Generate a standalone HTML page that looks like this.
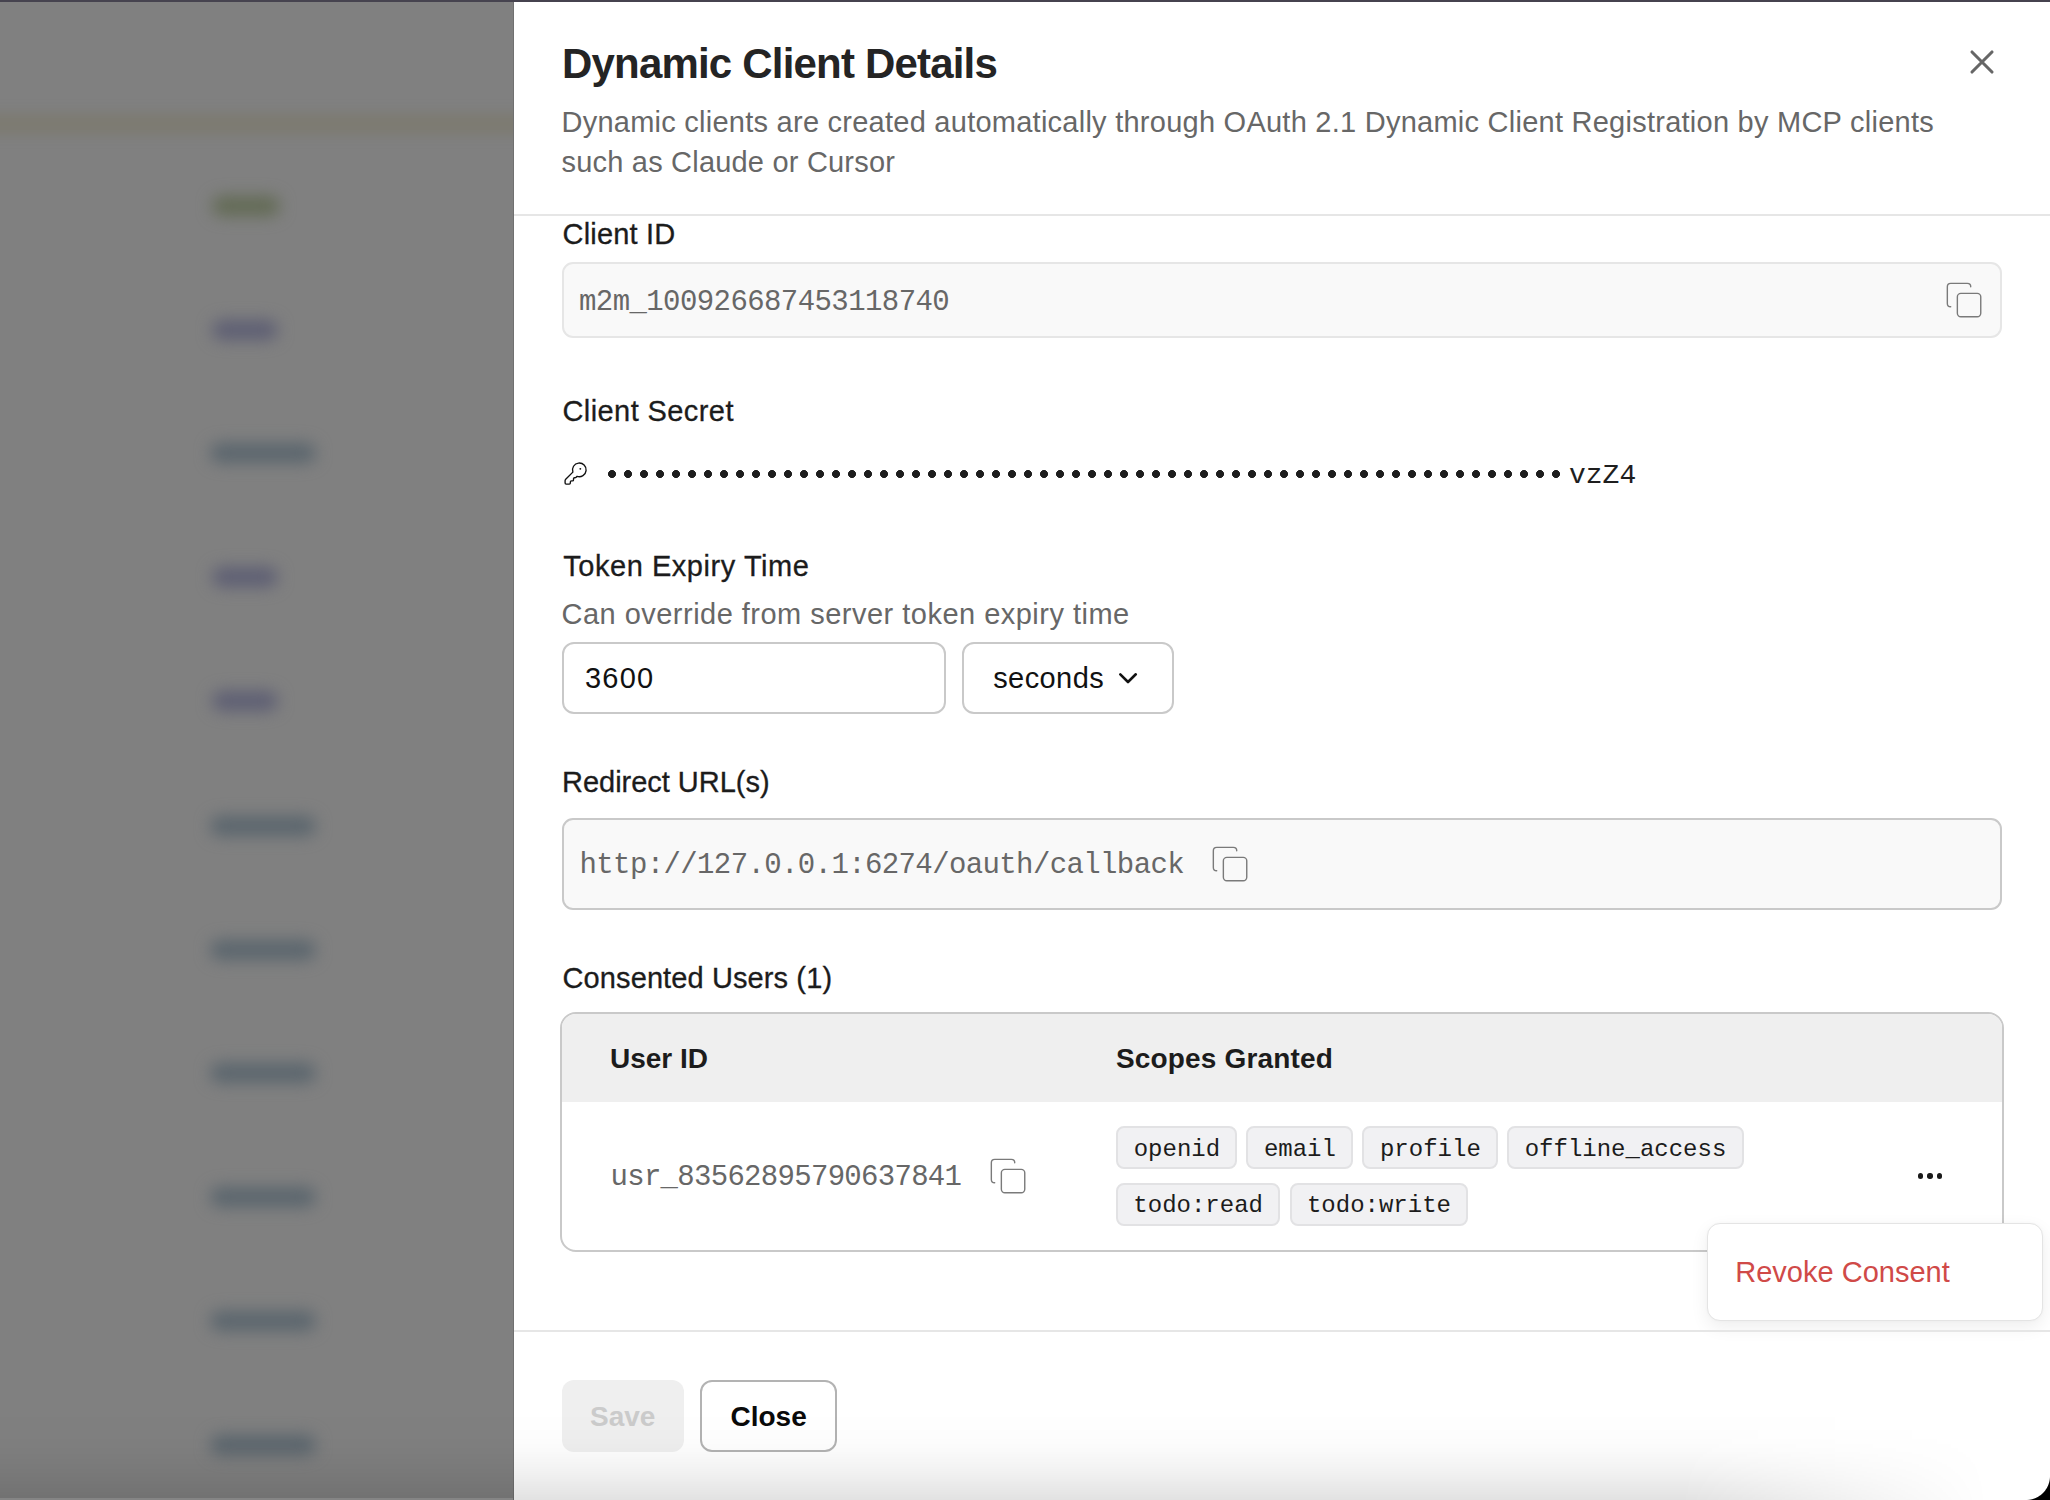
<!DOCTYPE html>
<html><head><meta charset="utf-8">
<style>
*{box-sizing:border-box;margin:0;padding:0}
html,body{width:2050px;height:1500px;overflow:hidden;background:#808080}
body{position:relative;font-family:"Liberation Sans",sans-serif}
.a{position:absolute;white-space:nowrap}
.s29{font-size:29px;line-height:29px}
.b28{font-size:28px;line-height:28px;font-weight:bold}
.b40{font-size:40px;line-height:40px;font-weight:bold}
.m29{font-family:"Liberation Mono",monospace;font-size:29px;line-height:29px;letter-spacing:-0.7px}
.m24{font-family:"Liberation Mono",monospace;font-size:24px;line-height:24px}
.val{color:#676767}
.lbl{color:#1c1c1c;-webkit-text-stroke:0.3px #1c1c1c}
.gray{color:#676767}
#bg{position:absolute;left:0;top:0;width:514px;height:1500px;background:#808080;overflow:hidden}
.pill{position:absolute;height:20px;border-radius:10px;filter:blur(8px)}
#topbar{position:absolute;left:0;top:0;width:2050px;height:2px;background:#46434f;z-index:10}
#panel{position:absolute;left:514px;top:0;width:1536px;height:1500px;background:#fff;overflow:hidden}
#pedge{position:absolute;left:513px;top:0;width:1px;height:1500px;background:#707070}
.chip{height:43.2px;background:#f1f1f3;border:2px solid #e2e2e4;border-radius:8px;font-family:"Liberation Mono",monospace;font-size:24px;line-height:24px;color:#1c1c1c}
.chip span{position:absolute;left:0;right:0;text-align:center;top:9.8px}
#shade{position:absolute;left:0;top:1410px;width:2050px;height:90px;background:linear-gradient(to bottom,rgba(0,0,0,0) 0%,rgba(0,0,0,0.007) 30%,rgba(0,0,0,0.02) 45%,rgba(0,0,0,0.05) 67%,rgba(0,0,0,0.115) 100%);-webkit-mask-image:linear-gradient(to right,#000 0%,#000 82%,rgba(0,0,0,0) 97%);z-index:5}
#corner{position:absolute;left:2026px;top:1476px;width:24px;height:24px;background:radial-gradient(circle at 0 0,rgba(0,0,0,0) 23.5px,#000 24.5px);z-index:11}
</style></head>
<body>
<div id="bg">
<div class="a" style="left:-30px;top:113px;width:580px;height:22px;background:#7c7a71;filter:blur(6px)"></div>
<div class="pill" style="left:212px;top:196px;width:68px;background:#626a54"></div>
<div class="pill" style="left:212px;top:320px;width:66px;background:#5d5e73"></div>
<div class="pill" style="left:210px;top:443px;width:106px;background:#5a656d"></div>
<div class="pill" style="left:212px;top:567px;width:66px;background:#5d5e73"></div>
<div class="pill" style="left:212px;top:691px;width:66px;background:#5d5e73"></div>
<div class="pill" style="left:210px;top:816px;width:106px;background:#5a656d"></div>
<div class="pill" style="left:210px;top:940px;width:106px;background:#5a656d"></div>
<div class="pill" style="left:210px;top:1063px;width:106px;background:#5a656d"></div>
<div class="pill" style="left:210px;top:1187px;width:106px;background:#5a656d"></div>
<div class="pill" style="left:210px;top:1311px;width:106px;background:#5a656d"></div>
<div class="pill" style="left:210px;top:1435px;width:106px;background:#5a656d"></div>
</div>
<div id="pedge"></div>
<div id="panel">
<div class="a b40" style="left:48px;top:43px;font-size:42px;line-height:42px;letter-spacing:-0.81px;color:#242424">Dynamic Client Details</div>
<svg class="a" style="left:1452px;top:46px" width="32" height="32" viewBox="0 0 32 32"><path d="M6 6L26 26M26 6L6 26" stroke="#666" stroke-width="3.1" stroke-linecap="round"/></svg>
<div class="a s29 gray" style="left:47.5px;top:108px;letter-spacing:0.25px">Dynamic clients are created automatically through OAuth 2.1 Dynamic Client Registration by MCP clients</div>
<div class="a s29 gray" style="left:47.5px;top:148px;letter-spacing:0.2px">such as Claude or Cursor</div>
<div class="a" style="left:0px;top:214px;width:1536px;height:2px;background:#e6e6e6"></div>
<div class="a s29 lbl" style="left:48.5px;top:220px;letter-spacing:0.2px">Client ID</div>
<div class="a" style="left:48px;top:262px;width:1440px;height:76px;background:#f9f9f9;border:2px solid #e6e6e6;border-radius:11px"></div>
<div class="a m29 val" style="left:65px;top:287.5px;letter-spacing:-0.58px">m2m_100926687453118740</div>
<svg class="a" style="left:1430px;top:280px" width="40.1" height="40.1" viewBox="0 0 24 24"><rect x="8" y="8" width="14" height="14" rx="2.1" fill="none" stroke="#7a7a7a" stroke-width="0.84"/><path d="M4 16c-1.1 0-2-.9-2-2V4c0-1.1.9-2 2-2h10c1.1 0 2 .9 2 2" fill="none" stroke="#7a7a7a" stroke-width="0.84" stroke-linecap="round"/></svg>
<div class="a s29 lbl" style="left:48.5px;top:397px;letter-spacing:0.41px">Client Secret</div>
<svg class="a" style="left:48.6px;top:461.2px" width="25.2" height="25.2" viewBox="0 0 24 24"><path d="M2.586 17.414A2 2 0 0 0 2 18.828V21a1 1 0 0 0 1 1h3a1 1 0 0 0 1-1v-1a1 1 0 0 1 1-1h1a1 1 0 0 0 1-1v-1a1 1 0 0 1 1-1h.172a2 2 0 0 0 1.414-.586l.814-.814a6.5 6.5 0 1 0-4-4z" fill="none" stroke="#111" stroke-width="1.3" stroke-linecap="round" stroke-linejoin="round"/><circle cx="16.5" cy="7.5" r="0.9" fill="#111"/></svg>
<div class="a" style="left:90px;top:466px;width:960px;height:16px;background:radial-gradient(circle at 8px 8px,#1e1e1e 3.7px,rgba(30,30,30,0) 4.3px) 0 0/16px 16px repeat-x"></div>
<div class="a m29" style="left:1055px;top:461.8px;color:#1e1e1e;font-size:28px;line-height:28px;letter-spacing:0px">vzZ4</div>
<div class="a s29 lbl" style="left:49.2px;top:552px;letter-spacing:0.55px">Token Expiry Time</div>
<div class="a s29 gray" style="left:47.5px;top:599.5px;letter-spacing:0.48px">Can override from server token expiry time</div>
<div class="a" style="left:48px;top:642px;width:384px;height:72px;background:#fff;border:2px solid #c9c9c9;border-radius:12px"></div>
<div class="a s29" style="left:70.9px;top:664px;color:#111;letter-spacing:1.27px">3600</div>
<div class="a" style="left:448px;top:642px;width:212px;height:72px;background:#fff;border:2px solid #c9c9c9;border-radius:12px"></div>
<div class="a s29" style="left:479.2px;top:664px;color:#111;letter-spacing:0.42px">seconds</div>
<svg class="a" style="left:596px;top:664px" width="36" height="28" viewBox="0 0 36 28"><path d="M10.3 10.3L18 18L25.8 10.3" fill="none" stroke="#111" stroke-width="2.6" stroke-linecap="round" stroke-linejoin="round"/></svg>
<div class="a s29 lbl" style="left:48px;top:768px;letter-spacing:-0.02px">Redirect URL(s)</div>
<div class="a" style="left:48px;top:818px;width:1440px;height:92px;background:#f9f9f9;border:2px solid #c9c9c9;border-radius:11px"></div>
<div class="a m29 val" style="left:65.5px;top:851px;letter-spacing:-0.61px">http://127.0.0.1:6274/oauth/callback</div>
<svg class="a" style="left:696px;top:844px" width="40.1" height="40.1" viewBox="0 0 24 24"><rect x="8" y="8" width="14" height="14" rx="2.1" fill="none" stroke="#7a7a7a" stroke-width="0.84"/><path d="M4 16c-1.1 0-2-.9-2-2V4c0-1.1.9-2 2-2h10c1.1 0 2 .9 2 2" fill="none" stroke="#7a7a7a" stroke-width="0.84" stroke-linecap="round"/></svg>
<div class="a s29 lbl" style="left:48.5px;top:964px;letter-spacing:0.11px">Consented Users (1)</div>
<div class="a" style="left:46px;top:1012px;width:1444px;height:240px;background:#fff;border:2px solid #c9c9c9;border-radius:16px;overflow:hidden"><div style="position:absolute;left:0;top:0;right:0;height:87.6px;background:#efefef"></div></div>
<div class="a b28" style="left:96px;top:1045px;color:#1c1c1c">User ID</div>
<div class="a b28" style="left:601.9px;top:1045px;color:#1c1c1c;letter-spacing:0.17px">Scopes Granted</div>
<div class="a m29 val" style="left:96.5px;top:1162.7px;">usr_83562895790637841</div>
<svg class="a" style="left:473.8px;top:1156px" width="40.1" height="40.1" viewBox="0 0 24 24"><rect x="8" y="8" width="14" height="14" rx="2.1" fill="none" stroke="#7a7a7a" stroke-width="0.84"/><path d="M4 16c-1.1 0-2-.9-2-2V4c0-1.1.9-2 2-2h10c1.1 0 2 .9 2 2" fill="none" stroke="#7a7a7a" stroke-width="0.84" stroke-linecap="round"/></svg>
<div class="a chip" style="left:602.3px;top:1126.3px;width:121.2px"><span>openid</span></div>
<div class="a chip" style="left:732.3px;top:1126.3px;width:107.2px"><span>email</span></div>
<div class="a chip" style="left:848.3px;top:1126.3px;width:136.2px"><span>profile</span></div>
<div class="a chip" style="left:993.3px;top:1126.3px;width:236.4px"><span>offline_access</span></div>
<div class="a chip" style="left:602.3px;top:1182.5px;width:163.7px"><span>todo:read</span></div>
<div class="a chip" style="left:775.5px;top:1182.5px;width:178.9px"><span>todo:write</span></div>
<div class="a" style="left:1403.9px;top:1173.3px;width:5.4px;height:5.4px;border-radius:50%;background:#1a1a1a"></div>
<div class="a" style="left:1413.2px;top:1173.3px;width:5.4px;height:5.4px;border-radius:50%;background:#1a1a1a"></div>
<div class="a" style="left:1422.7px;top:1173.3px;width:5.4px;height:5.4px;border-radius:50%;background:#1a1a1a"></div>
<div class="a" style="left:1193px;top:1223px;width:335.5px;height:97.5px;background:#fff;border:1px solid #e4e4e4;border-radius:13px;box-shadow:0 6px 18px rgba(0,0,0,0.07),0 0 3px rgba(0,0,0,0.03)"></div>
<div class="a s29" style="left:1221.3px;top:1258px;color:#d04a48;letter-spacing:0px">Revoke Consent</div>
<div class="a" style="left:0px;top:1330px;width:1536px;height:2px;background:#e6e6e6"></div>
<div class="a" style="left:48px;top:1380px;width:122px;height:72px;background:#efefef;border-radius:12px"></div>
<div class="a b28" style="left:76px;top:1403px;color:#cbcbcb">Save</div>
<div class="a" style="left:186px;top:1380px;width:137px;height:72px;background:#fff;border:2px solid #b3b3b3;border-radius:12px"></div>
<div class="a b28" style="left:216.5px;top:1403px;color:#0a0a0a">Close</div>
</div>
<div id="shade"></div>
<div id="topbar"></div>
<div style="position:absolute;left:0;top:1498px;width:513px;height:2px;background:#858585;z-index:6"></div>
<div id="corner"></div>
</body></html>
